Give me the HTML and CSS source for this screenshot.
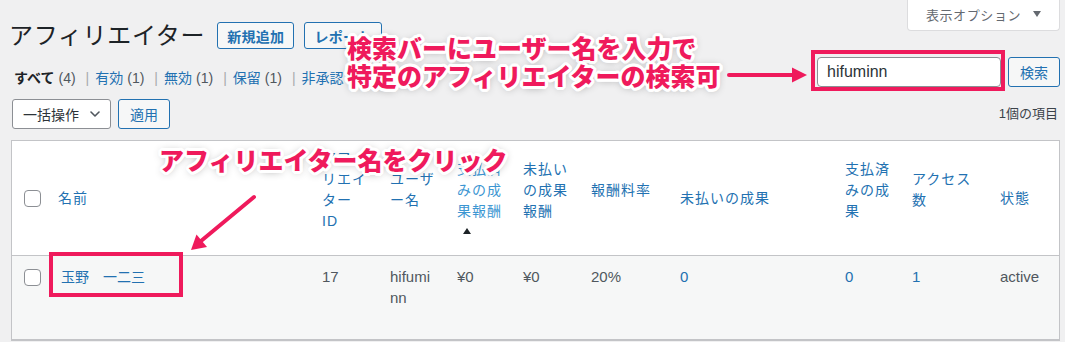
FILE: index.html
```html
<!DOCTYPE html>
<html lang="ja">
<head>
<meta charset="utf-8">
<title>アフィリエイター</title>
<link rel="stylesheet" href="styles.css">
</head>
<body>
<div class="screen-meta-links">
  <button class="screen-options" type="button">表示オプション<span class="caret"></span></button>
</div>
<div class="wrap">
  <div class="title-row">
    <h1>アフィリエイター</h1>
    <a class="title-action" href="#">新規追加</a>
    <a class="title-action" href="#">レポート</a>
  </div>

  <div class="filter-row">
    <ul class="subsubsub">
      <li class="current"><a href="#">すべて</a><span class="count">(4)</span><span class="sep">|</span></li>
      <li><a href="#">有効</a><span class="count">(1)</span><span class="sep">|</span></li>
      <li><a href="#">無効</a><span class="count">(1)</span><span class="sep">|</span></li>
      <li><a href="#">保留</a><span class="count">(1)</span><span class="sep">|</span></li>
      <li><a href="#">非承認</a></li>
    </ul>
    <div class="search-box">
      <input class="search-input" type="search" value="hifuminn">
      <button class="button" type="button">検索</button>
    </div>
  </div>

  <div class="tablenav">
    <div class="bulk">
      <div class="select-box">一括操作
        <svg class="chev" width="10" height="6" viewBox="0 0 10 6"><path d="M1 1l4 4 4-4" fill="none" stroke="#50575e" stroke-width="1.6" stroke-linecap="round" stroke-linejoin="round"/></svg>
      </div>
      <button class="button" type="button">適用</button>
    </div>
    <div class="displaying-num">1個の項目</div>
  </div>

  <table class="list">
    <colgroup>
      <col class="c-check"><col class="c-name"><col class="c-id"><col class="c-user"><col class="c-paidr"><col class="c-unpaidr"><col class="c-rate"><col class="c-unpaid"><col class="c-paid"><col class="c-access"><col class="c-status">
    </colgroup>
    <thead>
      <tr>
        <th class="check"><input class="cb" type="checkbox"></th>
        <th><a href="#">名前</a></th>
        <th class="sortable"><a href="#"><span>アフィリエイター ID</span><span class="sort-ind"></span></a></th>
        <th class="sortable"><a href="#"><span>ユーザー名</span><span class="sort-ind"></span></a></th>
        <th class="sortable sorted"><a href="#"><span>支払済みの成果報酬</span><span class="sort-ind"><span class="tri"></span></span></a></th>
        <th class="sortable"><a href="#"><span>未払いの成果報酬</span><span class="sort-ind"></span></a></th>
        <th class="sortable"><a href="#"><span>報酬料率</span><span class="sort-ind"></span></a></th>
        <th><a href="#">未払いの成果</a></th>
        <th class="sortable"><a href="#"><span>支払済みの成果</span><span class="sort-ind"></span></a></th>
        <th class="sortable"><a href="#"><span>アクセス数</span><span class="sort-ind"></span></a></th>
        <th><a href="#">状態</a></th>
      </tr>
    </thead>
    <tbody>
      <tr>
        <td class="check"><input class="cb" type="checkbox"></td>
        <td><a class="name" href="#">玉野　一二三</a></td>
        <td>17</td>
        <td>hifuminn</td>
        <td>¥0</td>
        <td>¥0</td>
        <td>20%</td>
        <td><a href="#">0</a></td>
        <td><a href="#">0</a></td>
        <td><a href="#">1</a></td>
        <td>active</td>
      </tr>
    </tbody>
  </table>
</div>

<div class="hl hl-search"></div>
<div class="hl hl-name"></div>
<svg class="arrows" width="1065" height="342" viewBox="0 0 1065 342">
  <line x1="729" y1="75" x2="796" y2="75" stroke="#ef1a5c" stroke-width="4" stroke-linecap="round"/>
  <polygon points="807,75 792,67.5 792,82.5" fill="#ef1a5c"/>
  <line x1="254" y1="197" x2="201" y2="241" stroke="#ef1a5c" stroke-width="4" stroke-linecap="round"/>
  <polygon points="191,250 196.5,234.5 207,247" fill="#ef1a5c"/>
</svg>
<div class="note note-search">検索バーにユーザー名を入力で<br>特定のアフィリエイターの検索可</div>
<div class="note note-name">アフィリエイター名をクリック</div>
</body>
</html>
```
FILE: styles.css
```css
* { box-sizing: border-box; }

html, body { margin: 0; padding: 0; }

body {
  background: #f0f0f1;
  font-family: "Liberation Sans", "Noto Sans CJK JP", sans-serif;
  font-size: 14px;
  color: #3c434a;
  position: relative;
}

a { color: #2271b1; text-decoration: none; }

/* screen options tab */
.screen-meta-links {
  float: right;
  margin-right: 5px;
}
.screen-options {
  display: flex;
  align-items: center;
  justify-content: center;
  width: 153px;
  height: 31px;
  margin: 0;
  padding: 0 0 2px;
  background: #fff;
  border: 1px solid #dcdcde;
  border-top: 0;
  border-radius: 0 0 4px 4px;
  font-family: "Liberation Sans", "Noto Sans CJK JP", sans-serif;
  font-size: 13px;
  letter-spacing: 0.6px;
  color: #646970;
}
.caret {
  display: inline-block;
  margin-left: 12px;
  width: 0;
  height: 0;
  border-left: 4px solid transparent;
  border-right: 4px solid transparent;
  border-top: 6px solid #646970;
}

.wrap {
  padding: 22px 5px 0 11px;
}

/* title */
.title-row {
  display: flex;
  align-items: center;
  height: 27px;
}
.title-row h1 {
  margin: 0 12px 0 -2px;
  font-size: 24px;
  letter-spacing: 0.7px;
  font-weight: 400;
  line-height: 27px;
  color: #1d2327;
}
.title-action {
  display: inline-flex;
  align-items: center;
  height: 27px;
  padding: 0 9px;
  margin-right: 10px;
  border: 1px solid #2271b1;
  border-radius: 3px;
  background: #f6f7f7;
  color: #2271b1;
  font-size: 14px;
  font-weight: 700;
  letter-spacing: 0.3px;
}

/* filters + search */
.filter-row {
  display: flex;
  justify-content: space-between;
  align-items: flex-start;
  margin-top: 8px;
}
.subsubsub {
  list-style: none;
  margin: 0 0 0 3px;
  padding: 11px 0 0;
  display: flex;
  font-size: 14px;
  line-height: 21px;
  color: #50575e;
}
.subsubsub li.current a {
  color: #1d2327;
  font-weight: 700;
}
.count { margin-left: 4px; }
.sep {
  color: #a7aaad;
  margin: 0 6px 0 10px;
}

.search-box {
  display: flex;
  gap: 7px;
}
.search-input {
  width: 184px;
  height: 30px;
  margin: 0;
  padding: 0 9px;
  border: 1px solid #8c8f94;
  border-radius: 4px;
  background: #fff;
  font-family: "Liberation Sans", "Noto Sans CJK JP", sans-serif;
  font-size: 16px;
  color: #2c3338;
}
.button {
  width: 52px;
  height: 30px;
  margin: 0;
  padding: 0;
  border: 1px solid #2271b1;
  border-radius: 3px;
  background: #f6f7f7;
  color: #2271b1;
  font-family: "Liberation Sans", "Noto Sans CJK JP", sans-serif;
  font-size: 14px;
}

/* tablenav */
.tablenav {
  display: flex;
  justify-content: space-between;
  align-items: center;
  height: 30px;
  margin-top: 10px;
}
.bulk {
  display: flex;
  gap: 7px;
  margin-left: 1px;
}
.select-box {
  display: flex;
  align-items: center;
  justify-content: space-between;
  width: 99px;
  height: 30px;
  padding: 0 10px;
  border: 1px solid #8c8f94;
  border-radius: 3px;
  background: #fff;
  color: #2c3338;
  font-size: 14px;
}
.chev { display: block; }
.displaying-num {
  font-size: 13px;
  color: #3c434a;
  margin-right: 2px;
  padding-bottom: 3px;
}

/* table */
.list {
  width: 100%;
  margin-top: 11px;
  table-layout: fixed;
  border-collapse: separate;
  border-spacing: 0;
  border: 1px solid #c3c4c7;
  background: #fff;
}
.c-check { width: 36px; }
.c-name { width: 264px; }
.c-id { width: 68px; }
.c-user { width: 67px; }
.c-paidr { width: 66px; }
.c-unpaidr { width: 68px; }
.c-rate { width: 89px; }
.c-unpaid { width: 165px; }
.c-paid { width: 67px; }
.c-access { width: 88px; }
.c-status { width: 69px; }

.list thead th {
  padding: 7px 10px;
  text-align: left;
  vertical-align: middle;
  font-weight: 400;
  font-size: 14px;
  letter-spacing: 1px;
  line-height: 21px;
  border-bottom: 1px solid #c3c4c7;
  line-break: loose;
}
.list thead th a { display: block; color: #2271b1; }
.list thead th.sorted a { color: #3c96d2; }
.sort-ind {
  display: block;
  height: 16px;
  padding: 6px 0 0 6px;
}
.tri {
  display: block;
  width: 0;
  height: 0;
  border-left: 4px solid transparent;
  border-right: 4px solid transparent;
  border-bottom: 6px solid #1d2327;
}

.list thead th.check {
  padding: 0 0 0 12px;
}

.cb {
  -webkit-appearance: none;
  appearance: none;
  display: block;
  width: 17px;
  height: 17px;
  margin: 0;
  border: 1px solid #8c8f94;
  border-radius: 4px;
  background: #fff;
}

.list tbody tr { height: 84px; }
.list tbody td {
  padding: 10px 10px;
  vertical-align: top;
  background: #f6f7f7;
  font-size: 15px;
  line-height: 21px;
  color: #50575e;
  border-bottom: 1px solid #c3c4c7;
  overflow-wrap: break-word;
}
.list tbody td.check {
  padding: 13px 0 0 12px;
}
.name {
  display: inline-block;
  margin-left: 3px;
  font-size: 14px;
}

/* annotations */
.hl {
  position: absolute;
  border: 4px solid #ef1a5c;
}
.hl-search { left: 811px; top: 50px; width: 194px; height: 41px; }
.hl-name { left: 49px; top: 252px; width: 134px; height: 45px; }

.arrows {
  position: absolute;
  left: 0;
  top: 0;
  pointer-events: none;
}

.note {
  position: absolute;
  white-space: nowrap;
  color: #ef1a5c;
  font-family: "Noto Sans CJK JP", sans-serif;
  font-weight: 900;
  font-size: 25px;
  line-height: 28px;
  text-shadow:
    3px 0 0 #fff, -3px 0 0 #fff, 0 3px 0 #fff, 0 -3px 0 #fff,
    2px 2px 0 #fff, -2px -2px 0 #fff, 2px -2px 0 #fff, -2px 2px 0 #fff,
    3px 1px 0 #fff, -3px 1px 0 #fff, 3px -1px 0 #fff, -3px -1px 0 #fff,
    1px 3px 0 #fff, -1px 3px 0 #fff, 1px -3px 0 #fff, -1px -3px 0 #fff,
    0 1px 8px rgba(0, 0, 0, 0.45);
}
.note-search { left: 347px; top: 33px; }
.note-name { left: 159px; top: 145px; }
```
